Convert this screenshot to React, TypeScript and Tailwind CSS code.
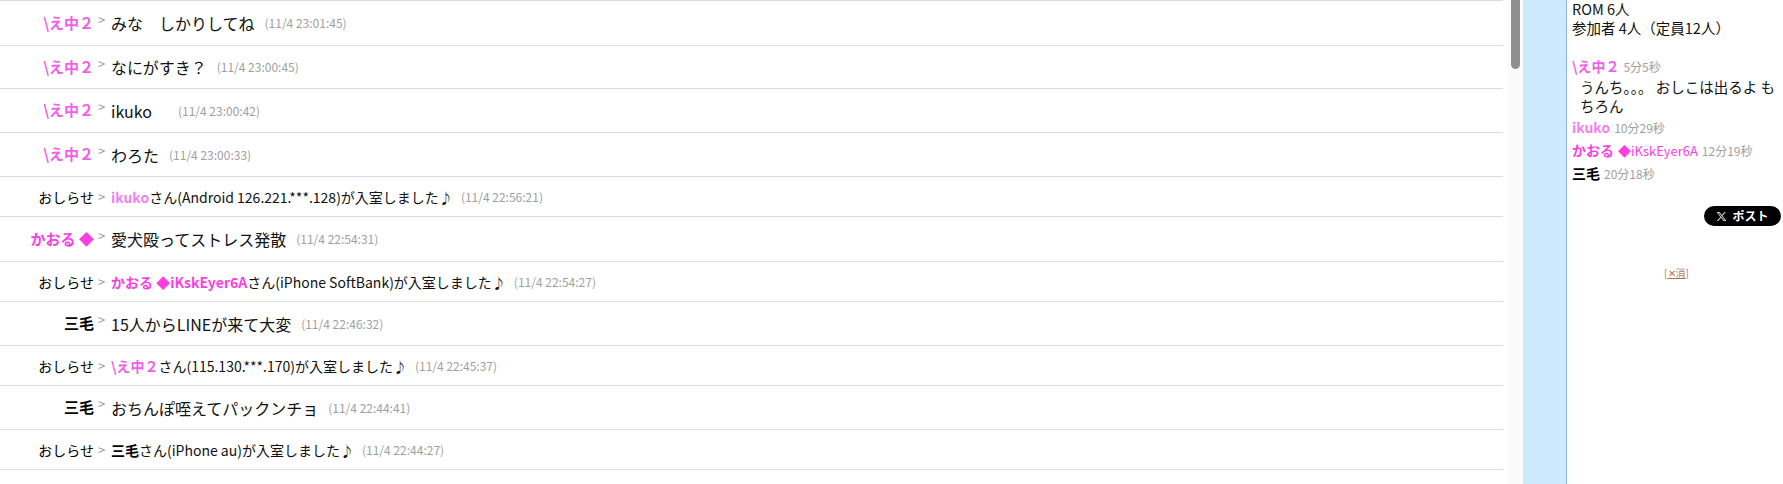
const jp = "font-['Noto_Sans_CJK_JP','Noto_Sans',sans-serif]";

type Row = {
  name?: string;
  nameClass?: string;
  notice?: React.ReactNode;
  text?: string;
  time: string;
  h: string;
};

const pinkName = "font-bold text-[#f060e6]";

const rows: Row[] = [
  { name: "\\え中２", nameClass: pinkName, text: "みな　しかりしてね", time: "(11/4 23:01:45)", h: "h-[45px]" },
  { name: "\\え中２", nameClass: pinkName, text: "なにがすき？", time: "(11/4 23:00:45)", h: "h-[43px]" },
  { name: "\\え中２", nameClass: pinkName, text: "ikuko　", time: "(11/4 23:00:42)", h: "h-11" },
  { name: "\\え中２", nameClass: pinkName, text: "わろた", time: "(11/4 23:00:33)", h: "h-11" },
  {
    notice: (
      <>
        <b className="text-[#ee82ee]">ikuko</b>さん(Android 126.221.***.128)が入室しました♪
      </>
    ),
    time: "(11/4 22:56:21)",
    h: "h-10",
  },
  { name: "かおる ◆", nameClass: "font-bold text-[#fb3fe0]", text: "愛犬殴ってストレス発散", time: "(11/4 22:54:31)", h: "h-[45px]" },
  {
    notice: (
      <>
        <b className="text-[#fb3fe0]">かおる ◆iKskEyer6A</b>さん(iPhone SoftBank)が入室しました♪
      </>
    ),
    time: "(11/4 22:54:27)",
    h: "h-10",
  },
  { name: "三毛", nameClass: "font-bold text-black", text: "15人からLINEが来て大変", time: "(11/4 22:46:32)", h: "h-11" },
  {
    notice: (
      <>
        <b className="text-[#f060e6]">\え中２</b>さん(115.130.***.170)が入室しました♪
      </>
    ),
    time: "(11/4 22:45:37)",
    h: "h-10",
  },
  { name: "三毛", nameClass: "font-bold text-black", text: "おちんぽ咥えてパックンチョ", time: "(11/4 22:44:41)", h: "h-11" },
  {
    notice: (
      <>
        <b className="text-black">三毛</b>さん(iPhone au)が入室しました♪
      </>
    ),
    time: "(11/4 22:44:27)",
    h: "h-10",
  },
  {
    notice: (
      <>
        <b className="text-[#b34dff]">多華子</b>さん(Android SoftBank 126.221.***.128)が入室しました♪
      </>
    ),
    time: "(11/4 22:40:12)",
    h: "h-10",
  },
];

function ChatRow({ row }: { row: Row }) {
  const isNotice = !!row.notice;
  return (
    <div className={`flex shrink-0 items-center border-b border-[#d3dded] ${row.h}`}>
      <div className={`w-[94px] shrink-0 text-right whitespace-nowrap ${isNotice ? "text-sm text-black" : `text-[15px] ${row.nameClass}`}`}>
        {isNotice ? "おしらせ" : row.name}
      </div>
      <div className={`w-[17px] shrink-0 pl-[4px] text-[13px] text-[#999] ${isNotice ? "" : "-mt-[7px]"}`}>&gt;</div>
      <div className={`whitespace-pre text-[#111] ${isNotice ? "text-sm" : "text-base"}`}>
        {row.notice ?? row.text}
      </div>
      <div className={`whitespace-nowrap text-xs text-[#a0a0a0] ${isNotice ? "ml-2" : "ml-[10px]"}`}>{row.time}</div>
    </div>
  );
}

function Member({ name, trip, time, cls }: { name: string; trip?: string; time: string; cls: string }) {
  return (
    <div className="h-[23px] leading-[23px] whitespace-nowrap">
      <b className={`text-sm ${cls}`}>{name}</b>
      {trip && <span className={`ml-1 text-[13px] ${cls}`}>{trip}</span>}
      <span className="ml-1 text-xs text-[#a0a0a0]">{time}</span>
    </div>
  );
}

export default function App() {
  return (
    <div className={`flex h-[484px] w-[1783px] overflow-hidden bg-white ${jp}`}>
      {/* Chat log */}
      <div className="flex w-[1503px] shrink-0 flex-col border-t border-[#d3dded]">
        {rows.map((row) => (
          <ChatRow key={row.time} row={row} />
        ))}
      </div>

      {/* Scrollbar */}
      <div className="ml-[5px] w-[15px] shrink-0 bg-[#fafafa] pl-[3px]">
        <div className="h-[69px] w-[9px] rounded-b-full bg-[#8f8f8f]" />
      </div>

      {/* Blue gutter */}
      <div className="w-11 shrink-0 border-r border-[#8fb8d0] bg-[#cde9fc]" />

      {/* Sidebar */}
      <div className="flex-1 pl-[5px] pr-[2px] text-[14.5px] leading-[19px] text-[#111]">
        <div className="-mt-px">ROM 6人</div>
        <div>参加者 4人（定員12人）</div>
        <div className="mt-[17px]">
          <Member name="\え中２" time="5分5秒" cls="text-[#f060e6]" />
          <div className="pl-2">うんち。。。 おしこは出るよ もちろん</div>
          <Member name="ikuko" time="10分29秒" cls="text-[#ee82ee]" />
          <Member name="かおる" trip="◆iKskEyer6A" time="12分19秒" cls="text-[#fb3fe0]" />
          <Member name="三毛" time="20分18秒" cls="text-black" />
        </div>
        <div className="mt-[22px] flex justify-end">
          <div className="flex h-5 w-[77px] items-center justify-center gap-[5px] rounded-full bg-black text-xs font-bold text-white">
            <svg viewBox="0 0 24 24" className="h-[11px] w-[11px]" fill="#cfcfcf">
              <path d="M18.244 2.25h3.308l-7.227 8.26 8.502 11.24H16.17l-5.214-6.817L4.99 21.75H1.68l7.73-8.835L1.254 2.25H8.08l4.713 6.231zm-1.161 17.52h1.833L7.084 4.126H5.117z" />
            </svg>
            ポスト
          </div>
        </div>
        <div className="mt-[41px] text-center text-[10px] leading-3 text-[#b87a4d]">
          <span>[<span className="underline">✕消</span>]</span>
        </div>
      </div>
    </div>
  );
}
